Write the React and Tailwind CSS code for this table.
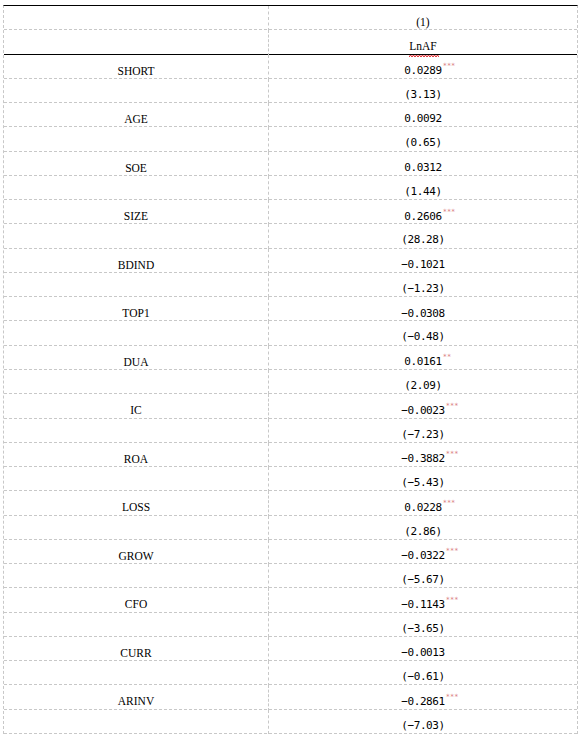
const rows = [
  ["SHORT", "0.0289", "***", "(3.13)"],
  ["AGE", "0.0092", "", "(0.65)"],
  ["SOE", "0.0312", "", "(1.44)"],
  ["SIZE", "0.2606", "***", "(28.28)"],
  ["BDIND", "−0.1021", "", "(−1.23)"],
  ["TOP1", "−0.0308", "", "(−0.48)"],
  ["DUA", "0.0161", "**", "(2.09)"],
  ["IC", "−0.0023", "***", "(−7.23)"],
  ["ROA", "−0.3882", "***", "(−5.43)"],
  ["LOSS", "0.0228", "***", "(2.86)"],
  ["GROW", "−0.0322", "***", "(−5.67)"],
  ["CFO", "−0.1143", "***", "(−3.65)"],
  ["CURR", "−0.0013", "", "(−0.61)"],
  ["ARINV", "−0.2861", "***", "(−7.03)"],
];

const serif = "font-['Liberation_Serif',serif] text-[11.5px]";
const mono = "font-['DejaVu_Sans_Mono',monospace] text-[11px] tracking-[-0.4px]";

const Row = ({ left, right, thick }) => (
  <div className={`grid grid-cols-[265px_1fr] h-[24.27px] border-b ${thick ? 'border-solid border-black' : 'border-dashed border-[#c8c8c8]'}`}>
    <div className="flex items-center justify-center pt-[8px] border-r border-dashed border-[#c8c8c8] text-black">{left}</div>
    <div className="flex items-center justify-center pt-[8px] text-black">{right}</div>
  </div>
);

const Coef = ({ value, stars }) => (
  <span className={`${mono} relative`}>
    {value}
    {stars && (
      <span className="absolute left-full top-[0px] ml-[1px] text-[7px] leading-none tracking-normal text-[#d97c80]">{stars}</span>
    )}
  </span>
);

const Wavy = () => (
  <svg className="absolute left-0 top-full mt-[-2px]" width="30" height="4" viewBox="0 0 30 4">
    <polyline
      points="0,3 1.5,1 3,3 4.5,1 6,3 7.5,1 9,3 10.5,1 12,3 13.5,1 15,3 16.5,1 18,3 19.5,1 21,3 22.5,1 24,3 25.5,1 27,3 28.5,1 30,3"
      fill="none"
      stroke="#e0242a"
      strokeWidth="1"
    />
  </svg>
);

export default function App() {
  return (
    <div className="bg-white w-[581px] h-[737px] pt-[5px] pl-[3px]">
      <div className="w-[575px] border-t border-black border-l border-r border-l-[#c8c8c8] border-r-[#c8c8c8] [border-left-style:dashed] [border-right-style:dashed]">
        <Row left={null} right={<span className={serif}>(1)</span>} />
        <Row
          thick
          left={null}
          right={
            <span className={`${serif} relative`}>
              LnAF
              <Wavy />
            </span>
          }
        />
        {rows.map(([name, coef, stars, t]) => (
          <div key={name}>
            <Row left={<span className={serif}>{name}</span>} right={<Coef value={coef} stars={stars} />} />
            <Row left={null} right={<span className={mono}>{t}</span>} />
          </div>
        ))}
      </div>
    </div>
  );
}
